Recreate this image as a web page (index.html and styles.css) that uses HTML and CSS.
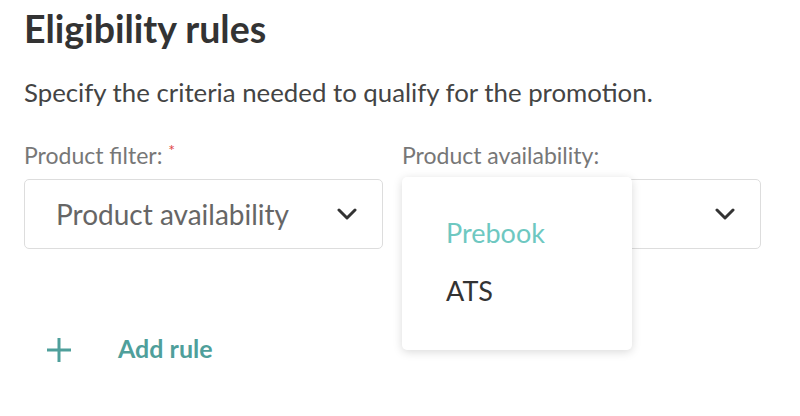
FILE: index.html
```html
<!DOCTYPE html>
<html lang="en">
<head>
<meta charset="utf-8">
<title>Eligibility rules</title>
<link rel="stylesheet" href="styles.css">
</head>
<body>
<main class="page">
  <h1 class="title">Eligibility rules</h1>
  <p class="subtitle">Specify the criteria needed to qualify for the promotion.</p>
  <div class="fields">
    <div class="field">
      <label class="label">Product filter: <span class="req">*</span></label>
      <div class="select">
        <span class="select-value">Product availability</span>
        <svg class="chev" viewBox="0 0 20 12" width="20" height="12"><path d="M2 2 L10 10 L18 2" fill="none" stroke="#333" stroke-width="3" stroke-linecap="round" stroke-linejoin="round"/></svg>
      </div>
    </div>
    <div class="field">
      <label class="label">Product availability:</label>
      <div class="select">
        <span class="select-value"></span>
        <svg class="chev" viewBox="0 0 20 12" width="20" height="12"><path d="M2 2 L10 10 L18 2" fill="none" stroke="#333" stroke-width="3" stroke-linecap="round" stroke-linejoin="round"/></svg>
      </div>
      <ul class="menu">
        <li class="menu-item active">Prebook</li>
        <li class="menu-item">ATS</li>
      </ul>
    </div>
  </div>
  <button class="add">
    <svg class="plus" viewBox="0 0 26 26" width="26" height="26"><path d="M13 1 V25 M1 13 H25" stroke="#4f9f9b" stroke-width="3"/></svg>
    <span class="add-text">Add rule</span>
  </button>
</main>
</body>
</html>
```
FILE: styles.css
```css
* { box-sizing: border-box; }
html, body { margin: 0; padding: 0; background: #fff; }
body { font-family: Lato, "Open Sans", sans-serif; }
.page { padding: 7px 24px 0 24px; }
.title {
  margin: 0;
  font-size: 37.5px;
  font-weight: 700;
  color: #333;
  line-height: 44px;
}
.subtitle {
  margin: 26px 0 0 0;
  font-size: 25.8px;
  color: #444;
  line-height: 30px;
}
.fields {
  display: flex;
  gap: 19px;
  margin-top: 35px;
}
.field { position: relative; width: 359px; }
.label {
  display: block;
  font-size: 23px;
  color: #777;
  line-height: 26px;
  height: 26px;
}
.req { color: #e04545; font-size: 16px; vertical-align: top; line-height: 16px; }
.select {
  margin-top: 11px;
  height: 70px;
  border: 1px solid #ddd;
  border-radius: 5px;
  display: flex;
  align-items: center;
  justify-content: space-between;
  padding: 0 25px 0 31px;
}
.select-value { font-size: 28px; color: #666; }
.chev { display: block; }
.menu {
  position: absolute;
  left: 0;
  top: 35px;
  width: 230px;
  height: 173px;
  margin: 0;
  padding: 41px 0 0 44px;
  list-style: none;
  background: #fff;
  border-radius: 5px;
  box-shadow: 0 2px 10px rgba(0,0,0,0.15);
}
.menu-item { font-size: 27px; line-height: 30px; color: #333; margin-bottom: 28px; }
.menu-item.active { color: #6ec8c1; }
.add {
  display: flex;
  align-items: center;
  gap: 46px;
  margin: 86px 0 0 22px;
  padding: 0;
  border: 0;
  background: none;
  font-family: inherit;
}
.plus { display: block; }
.add-text { font-size: 25px; line-height: 26px; font-weight: 700; color: #4f9f9b; margin-bottom: 4px; }
```
